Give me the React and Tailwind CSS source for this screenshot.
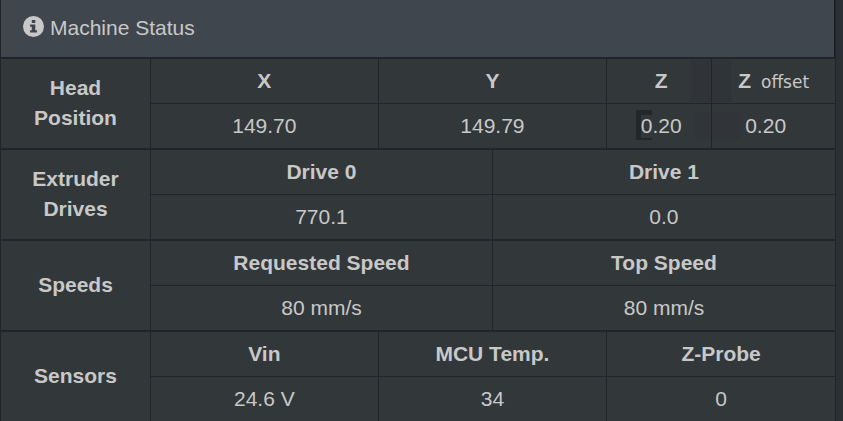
import React from "react";

const line = "border-[#212428]";

const groups = [
  {
    name: "Head Position",
    columns: [
      { title: "X", value: "149.70", width: "w-[27.3%]" },
      { title: "Y", value: "149.79", width: "w-[27.4%]" },
      { title: "Z", value: "0.20", width: "w-[12.6%]", marked: true },
      { title: "Z", suffix: "offset", value: "0.20", shaded: true },
    ],
  },
  {
    name: "Extruder Drives",
    columns: [
      { title: "Drive 0", value: "770.1", width: "w-[41%]" },
      { title: "Drive 1", value: "0.0" },
    ],
  },
  {
    name: "Speeds",
    columns: [
      { title: "Requested Speed", value: "80 mm/s", width: "w-[41%]" },
      { title: "Top Speed", value: "80 mm/s" },
    ],
  },
  {
    name: "Sensors",
    columns: [
      { title: "Vin", value: "24.6 V", width: "w-[27.3%]" },
      { title: "MCU Temp.", value: "34", width: "w-[27.4%]" },
      { title: "Z-Probe", value: "0" },
    ],
  },
];

function InfoIcon() {
  return (
    <svg viewBox="0 0 21 21" className="mb-1 size-[21px] shrink-0" aria-hidden="true">
      <circle cx="10.5" cy="10.5" r="10.5" fill="#c8c8c8" />
      <path
        fill="#40464d"
        d="M8.8 3.9h3.5v3H8.8zM7.1 8.5h5.2v5.8h1.7v2.2H7.1v-2.2h1.7v-3.6H7.1z"
      />
    </svg>
  );
}

function Title({ column }) {
  return (
    <th scope="col" className={`relative border-l py-[7px] font-bold ${line} ${column.width ?? ""}`}>
      {column.marked && <span className="absolute inset-y-px right-0 w-[21px] bg-[#303438]" />}
      {column.shaded && <span className="absolute inset-y-px left-0 w-5 bg-[#303438]" />}
      {column.suffix ? (
        <span className="relative flex items-baseline justify-center gap-2.5">
          {column.title}
          <span className="font-['DejaVu_Sans',sans-serif] text-[17px] leading-5 font-normal">{column.suffix}</span>
        </span>
      ) : (
        <span className={column.marked ? "relative pl-1" : "relative"}>{column.title}</span>
      )}
    </th>
  );
}

function Value({ column }) {
  return (
    <td className={`relative border-t border-l py-[7px] ${line}`}>
      {column.marked && (
        <>
          <span className="absolute top-1.5 left-[29px] h-[30px] w-4 border-t-[5px] border-b-2 border-l-[5px] border-[#24272a]" />
          <span className="absolute inset-y-2 right-0 w-4 bg-[#313539]" />
        </>
      )}
      {column.shaded && <span className="absolute inset-y-2 left-0 w-7 bg-[#313539]" />}
      <span className={column.marked ? "relative pl-1" : column.shaded ? "relative pr-4" : "relative"}>
        {column.value}
      </span>
    </td>
  );
}

function Group({ group }) {
  return (
    <table className={`w-full table-fixed border-separate border-spacing-0 border-t-2 text-center ${line}`}>
      <tbody>
        <tr>
          <th scope="rowgroup" rowSpan={2} className="w-[149px] px-6 pb-0.5 font-bold">
            {group.name}
          </th>
          {group.columns.map((column, i) => (
            <Title key={i} column={column} />
          ))}
        </tr>
        <tr>
          {group.columns.map((column, i) => (
            <Value key={i} column={column} />
          ))}
        </tr>
      </tbody>
    </table>
  );
}

export default function App() {
  return (
    <main className="min-h-screen bg-[#2b3034] pr-[7px] font-['Liberation_Sans',Arial,sans-serif] text-[21px] leading-[30px] text-[#c8c8c8]">
      <section className="border-x border-[#212428] bg-[#32373a]">
        <h1 className="flex items-center gap-1.5 border-r border-[#191c1f] bg-[#40464d] pt-[13px] pb-3.5 pl-[22px]">
          <InfoIcon />
          Machine Status
        </h1>
        {groups.map((group) => (
          <Group key={group.name} group={group} />
        ))}
      </section>
    </main>
  );
}
